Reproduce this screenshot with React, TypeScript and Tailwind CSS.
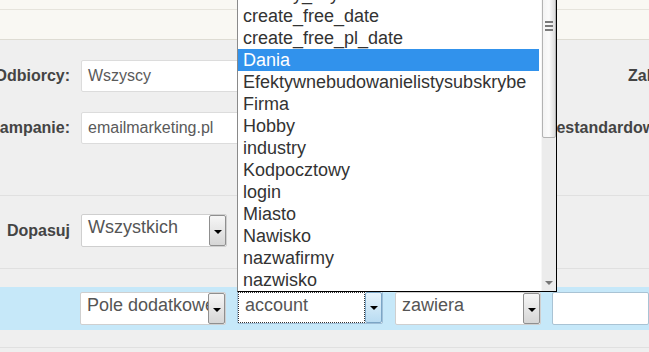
import React from 'react';

const fields = [
  'country_city',
  'create_free_date',
  'create_free_pl_date',
  'Dania',
  'Efektywnebudowanielistysubskrybe',
  'Firma',
  'Hobby',
  'industry',
  'Kodpocztowy',
  'login',
  'Miasto',
  'Nawisko',
  'nazwafirmy',
  'nazwisko',
];

function Arrow() {
  return <span className="block w-0 h-0 border-l-[4px] border-r-[4px] border-t-[4px] border-l-transparent border-r-transparent border-t-black" />;
}

function Select({ value, width, focus }: { value: string; width: string; focus?: boolean }) {
  return (
    <div className={`flex h-[33px] ${width} bg-white border ${focus ? 'border-[#9fbfd8]' : 'border-[#cfcfcf]'} rounded-[2px]`}>
      <div
        className={`flex-1 min-w-0 overflow-hidden whitespace-nowrap pl-[6px] leading-[24px] text-[18px] text-[#555] ${
          focus ? 'border border-dotted border-[#333]' : ''
        }`}
      >
        {value}
      </div>
      <div
        className={`w-[17px] shrink-0 flex items-center justify-center pt-[2px] rounded-[2px] border ${
          focus
            ? 'border-[#7ca6c6] bg-gradient-to-b from-[#e6f3fb] to-[#b9dcf2]'
            : 'border-[#8f8f8f] bg-gradient-to-b from-[#f6f6f6] to-[#d6d6d6]'
        }`}
      >
        <Arrow />
      </div>
    </div>
  );
}

function Input({ value, width }: { value: string; width: string }) {
  return (
    <div className={`h-[32px] ${width} shrink-0 bg-white border border-[#dcdcdc] rounded-[2px] pl-[6px] flex items-center text-[16px] text-[#5a5a5a]`}>
      {value}
    </div>
  );
}

function Label({ text }: { text: string }) {
  return (
    <div className="w-[70px] shrink-0 flex justify-end">
      <span className="shrink-0 whitespace-nowrap text-[16px] font-bold text-[#444]">{text}</span>
    </div>
  );
}

export default function App() {
  return (
    <div className="relative w-[649px] h-[352px] overflow-hidden bg-[#efefef] font-['Liberation_Sans',Arial,sans-serif]">
      {/* header band */}
      <div className="h-[40px] bg-[#f9f8f3] border-b border-[#dedcd3]">
        <div className="h-[10px] border-b border-[#e6e4dc]" />
      </div>

      {/* recipients / campaigns */}
      <div className="h-[156px] pt-[20px] border-b border-[#e0e0e0] flex flex-col gap-[20px]">
        <div className="flex items-center whitespace-nowrap">
          <Label text="Odbiorcy:" />
          <div className="w-[11px] shrink-0" />
          <Input value="Wszyscy" width="w-[300px]" />
          <span className="ml-[247px] shrink-0 text-[16px] font-bold text-[#444]">Zakres:</span>
        </div>
        <div className="flex items-center whitespace-nowrap">
          <Label text="Kampanie:" />
          <div className="w-[11px] shrink-0" />
          <Input value="emailmarketing.pl" width="w-[300px]" />
          <span className="ml-[123px] shrink-0 text-[16px] font-bold text-[#444]">Pola niestandardowe:</span>
        </div>
      </div>

      {/* match */}
      <div className="h-[73px] pt-[18px] border-b border-[#e0e0e0]">
        <div className="flex items-center">
          <Label text="Dopasuj" />
          <div className="w-[11px] shrink-0" />
          <Select value="Wszystkich" width="w-[146px]" />
        </div>
      </div>

      {/* condition row */}
      <div className="mt-[18px] h-[43px] bg-[#c6e8f9] flex items-center">
        <div className="w-[80px] shrink-0" />
        <Select value="Pole dodatkowe" width="w-[146px]" />
        <div className="w-[11px] shrink-0" />
        <div className="-mt-[3px]">
          <Select value="account" width="w-[146px]" focus />
        </div>
        <div className="w-[12px] shrink-0" />
        <Select value="zawiera" width="w-[146px]" />
        <div className="w-[11px] shrink-0" />
        <div className="h-[33px] flex-1 bg-white border border-[#a9c3d4] rounded-[2px]" />
      </div>
      <div className="mt-[17px] border-t border-[#e0e0e0]" />

      {/* open dropdown list */}
      <div className="absolute left-[237px] top-[-18px] w-[320px] flex bg-white border border-black border-l-[#8a8a8a] border-t-[#8a8a8a] text-[18px] text-[#333] leading-[22px]">
        <div className="flex-1 flex flex-col pr-[2px]">
          {fields.map((f) => (
            <div
              key={f}
              className={`h-[22px] pl-[5px] whitespace-nowrap ${f === 'Dania' ? 'bg-[#3192ec] text-white' : ''}`}
            >
              {f}
            </div>
          ))}
        </div>
        <div className="w-[15px] shrink-0 flex flex-col bg-[#ececec] border-l border-[#f7f7f7]">
          <div className="h-[155px] bg-gradient-to-r from-[#f3f3f3] via-[#fbfbfb] to-[#dcdcdc] border border-[#b3b3b3] rounded-[2px] pt-[37px] flex flex-col items-center gap-[2px]">
            <span className="block w-[8px] h-[2px] bg-[#7a7a7a]" />
            <span className="block w-[8px] h-[2px] bg-[#7a7a7a]" />
            <span className="block w-[8px] h-[2px] bg-[#7a7a7a]" />
          </div>
          <div className="flex-1" />
          <div className="h-[16px] flex items-center justify-center">
            <span className="block w-0 h-0 border-l-[4px] border-r-[4px] border-t-[4px] border-l-transparent border-r-transparent border-t-[#777]" />
          </div>
        </div>
      </div>
    </div>
  );
}
